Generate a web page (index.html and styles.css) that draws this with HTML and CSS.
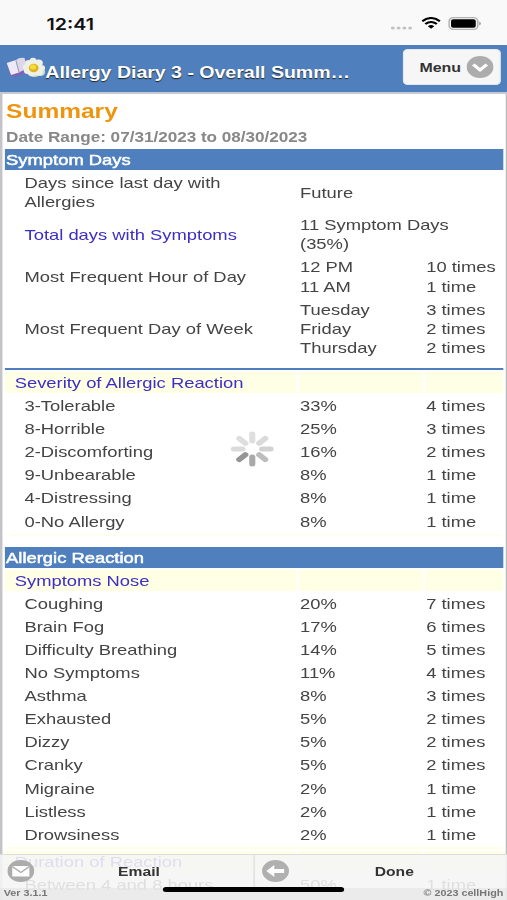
FILE: index.html
```
<!DOCTYPE html>
<html lang="en">
<head>
    <meta charset="UTF-8">
    <title>Allergy Diary 3 - Overall Summary</title>
    <link rel="stylesheet" href="styles.css">
</head>
<body>
<div class="app">
    <!-- Status Bar -->
    <div class="status-bar">
        <span class="time">12:41</span>
        <div class="status-icons">
            <svg class="dots" width="18" height="4" viewBox="0 0 18 4" fill="#c2c2c2">
                <circle cx="1.8" cy="2" r="1.6"/><circle cx="6.5" cy="2" r="1.6"/><circle cx="11.2" cy="2" r="1.6"/><circle cx="15.9" cy="2" r="1.6"/>
            </svg>
            <svg class="wifi" width="16" height="12" viewBox="0 0 16 12" fill="none" stroke="#000" stroke-width="2">
                <path d="M.8 4.3Q8-2.3 15.2 4.3"/>
                <path d="M3.3 7Q8 2.9 12.7 7"/>
                <path d="M8 11.8L5.4 9.2Q8 7 10.6 9.2Z" fill="#000" stroke="none"/>
            </svg>
            <svg class="battery" width="27" height="13" viewBox="0 0 27 13">
                <rect x=".7" y=".7" width="23.4" height="11.6" rx="3.4" fill="#f9f9f9" stroke="#b2b2b2" stroke-width="1.3"/>
                <rect x="2.3" y="2.3" width="20.2" height="8.4" rx="1.8"/>
                <path d="M25.2 4.5Q26.8 5 26.8 6.5T25.2 8.5Z" fill="#aaa"/>
            </svg>
        </div>
    </div>

    <!-- Header -->
    <div class="header">
        <svg class="logo" width="32" height="24" viewBox="0 0 32 24">
            <path d="M.5 7L3 19 6 21 18 17 17 3Z" fill="#8063b5"/>
            <path d="M.5 7L8 4 10.500 16.500 4 19Z" fill="#eeeaf5"/>
            <path d="M8 4Q11 1 15 2L18 14Q13 13.500 10.500 16.500Z" fill="#dcd8e8"/>
            <path d="M8 4.500L10.500 16" stroke="#a79fbd" fill="none"/>
            <g fill="#d3dbd0">
                <ellipse cx="23" cy="18" rx="4" ry="3"/>
                <ellipse cx="28" cy="16" rx="4" ry="4"/>
            </g>
            <g fill="#eef0e8">
                <ellipse cx="22" cy="5.500" rx="3" ry="3.800"/>
                <ellipse cx="21" cy="16.500" rx="3.500" ry="3.500"/>
                <ellipse cx="17" cy="11" rx="3.500" ry="3"/>
                <ellipse cx="28.500" cy="12" rx="3.300" ry="3"/>
                <circle cx="18.500" cy="7" r="3"/><circle cx="26.500" cy="7" r="3.500"/>
                <circle cx="17.500" cy="15" r="3"/><circle cx="26.500" cy="16" r="3.500"/>
            </g>
            <ellipse cx="22.500" cy="12" rx="4" ry="4.200" fill="#dfb51b"/>
            <ellipse cx="22" cy="11" rx="2.500" ry="2.500" fill="#f3dc3f"/>
        </svg>
        <div class="title">Allergy Diary 3 - Overall Summ…</div>
        <div class="menu-button">
            Menu
            <svg width="22" height="22" viewBox="0 0 22 22">
                <circle cx="11" cy="11" r="11" fill="#acacac"/>
                <path d="M5.500 8.500L11 14 16.500 8.500" fill="none" stroke="#fff" stroke-width="3"/>
            </svg>
        </div>
    </div>

    <!-- Summary Content -->
    <div class="content">
        <h1>Summary</h1>
        <div class="date-range">Date Range: 07/31/2023 to 08/30/2023</div>
        <div class="report">
            <div class="section-bar">Symptom Days</div>
            <div class="row"><div>Days since last day with<br>Allergies</div><div>Future</div><div></div></div>
            <div class="row"><div class="link">Total days with Symptoms</div><div class="wide">11 Symptom Days<br>(35%)</div></div>
            <div class="row"><div>Most Frequent Hour of Day</div><div>12 PM<br>11 AM</div><div>10 times<br>1 time</div></div>
            <div class="row"><div>Most Frequent Day of Week</div><div>Tuesday<br>Friday<br>Thursday</div><div>3 times<br>2 times<br>2 times</div></div>

            <div class="divider"></div>
            <div class="row sub"><div>Severity of Allergic Reaction</div><div></div><div></div></div>
            <div class="row"><div>3-Tolerable</div><div>33%</div><div>4 times</div></div>
            <div class="row"><div>8-Horrible</div><div>25%</div><div>3 times</div></div>
            <div class="row"><div>2-Discomforting</div><div>16%</div><div>2 times</div></div>
            <div class="row"><div>9-Unbearable</div><div>8%</div><div>1 time</div></div>
            <div class="row"><div>4-Distressing</div><div>8%</div><div>1 time</div></div>
            <div class="row"><div>0-No Allergy</div><div>8%</div><div>1 time</div></div>
            <div class="spacer"></div>

            <div class="section-bar">Allergic Reaction</div>
            <div class="row sub"><div>Symptoms Nose</div><div></div><div></div></div>
            <div class="row"><div>Coughing</div><div>20%</div><div>7 times</div></div>
            <div class="row"><div>Brain Fog</div><div>17%</div><div>6 times</div></div>
            <div class="row"><div>Difficulty Breathing</div><div>14%</div><div>5 times</div></div>
            <div class="row"><div>No Symptoms</div><div>11%</div><div>4 times</div></div>
            <div class="row"><div>Asthma</div><div>8%</div><div>3 times</div></div>
            <div class="row"><div>Exhausted</div><div>5%</div><div>2 times</div></div>
            <div class="row"><div>Dizzy</div><div>5%</div><div>2 times</div></div>
            <div class="row"><div>Cranky</div><div>5%</div><div>2 times</div></div>
            <div class="row"><div>Migraine</div><div>2%</div><div>1 time</div></div>
            <div class="row"><div>Listless</div><div>2%</div><div>1 time</div></div>
            <div class="row"><div>Drowsiness</div><div>2%</div><div>1 time</div></div>
            <div class="spacer small"></div>
            <div class="row sub"><div>Duration of Reaction</div><div></div><div></div></div>
            <div class="row"><div>Between 4 and 8 hours</div><div>50%</div><div>1 time</div></div>
        </div>
    </div>

    <!-- Loading Spinner -->
    <svg class="spinner" width="36" height="36" viewBox="-18 -18 36 36" stroke-width="5" stroke-linecap="round">
        <path d="M0-8V-15" stroke="#dedede"/>
        <path d="M0-8V-15" stroke="#dadada" transform="rotate(45)"/>
        <path d="M0-8V-15" stroke="#d2d2d2" transform="rotate(90)"/>
        <path d="M0-8V-15" stroke="#bdbdbd" transform="rotate(135)"/>
        <path d="M0-8V-15" stroke="#a9a9a9" transform="rotate(180)"/>
        <path d="M0-8V-15" stroke="#959595" transform="rotate(225)"/>
        <path d="M0-8V-15" stroke="#dbdbdb" transform="rotate(270)"/>
        <path d="M0-8V-15" stroke="#dedede" transform="rotate(315)"/>
    </svg>

    <!-- Footer -->
    <div class="footer">
        <div class="footer-buttons">
            <div class="footer-button">
                <svg width="22" height="22" viewBox="0 0 22 22">
                    <circle cx="11" cy="11" r="11" fill="#acacac"/>
                    <rect x="4" y="6" width="14" height="10.500" fill="#fff"/>
                    <path d="M4 6.500L11 12.500 18 6.500" fill="none" stroke="#acacac" stroke-width="1.300"/>
                </svg>
                Email
            </div>
            <div class="footer-button">
                <svg width="22" height="22" viewBox="0 0 22 22">
                    <circle cx="11" cy="11" r="11" fill="#b0b0b0"/>
                    <path d="M3.500 11L10 5V9H18V13H10V17Z" fill="#fff"/>
                </svg>
                Done
            </div>
        </div>
        <div class="footer-info"><span>Ver 3.1.1</span><span>© 2023 cellHigh</span></div>
    </div>
    <div class="home-indicator"></div>
</div>
</body>
</html>
```

FILE: styles.css
```
body {
    margin: 0;
    overflow: hidden;
    background-color: #fff;
    font-family: "Liberation Sans", Arial, sans-serif;
}

.app {
    position: relative;
    width: 414px;
    height: 900px;
    overflow: hidden;
    transform: scaleX(1.2246);
    transform-origin: 0 0;
    color: #444;
}

/* Status Bar */
.status-bar {
    display: flex;
    justify-content: space-between;
    box-sizing: border-box;
    height: 45px;
    padding: 16px 21px 0 38px;
    background-color: #f9f9f9;
}

.time {
    font: 600 16px/16px Inter, sans-serif;
    color: #111;
}

.status-icons {
    display: flex;
    height: 14px;
    gap: 6px;
    align-items: center;
}

.dots {
    margin-top: 9px;
    margin-right: 1px;
}

/* Header */
.header {
    display: flex;
    box-sizing: border-box;
    height: 49px;
    padding: 4px 5px 0 5px;
    background-color: #4f80bd;
    border-bottom: 2px solid #c3cad6;
}

.logo {
    margin-top: 7px;
}

.title {
    flex: 1;
    padding-top: 14px;
    font-weight: bold;
    font-size: 16px;
    line-height: 20px;
    letter-spacing: -0.03px;
    color: #fff;
    text-shadow: 0 1px 1px #222;
    white-space: nowrap;
}

.menu-button {
    display: flex;
    align-items: center;
    gap: 5px;
    box-sizing: border-box;
    width: 80px;
    height: 36px;
    padding-left: 12.5px;
    background-color: #f6f6f6;
    border: 1px solid #e4e8ee;
    border-radius: 4px;
    font-weight: bold;
    font-size: 13px;
    color: #333;
}

/* Summary */
.content {
    box-sizing: border-box;
    height: 806px;
    padding: 5px 2px 0 2px;
    border-left: 2px solid #c4c4c8;
    border-right: 1px solid #bbb;
}

h1 {
    margin: 0 0 0 1px;
    font-size: 20px;
    line-height: 24px;
    color: #ee9510;
}

.date-range {
    margin: 4px 0 0 1px;
    height: 22px;
    font-weight: bold;
    font-size: 14px;
    line-height: 20px;
    letter-spacing: -0.02px;
    color: #888;
}

.report {
    display: flex;
    flex-direction: column;
    gap: 2px;
    font-size: 15px;
    line-height: 19.1px;
}

.section-bar {
    padding: 1px;
    background-color: #4f80bd;
    color: #fff;
    -webkit-text-stroke: 0.5px #fff;
}

.row {
    display: grid;
    grid-template-columns: 238px 101px 1fr;
    gap: 2px;
    align-items: center;
}

.row div {
    padding: 1px 1px 1px 16px;
    min-height: 19.1px;
}

.row div + div {
    padding-left: 1px;
    padding-right: 0;
}

.row .wide {
    grid-column: 2 / 4;
}

.link,
.sub {
    color: #3c2fc5;
}

.row.sub div {
    padding-left: 8px;
    background-color: #ffffe5;
}

.divider {
    height: 2px;
    margin-top: 8px;
    background-color: #4f80bd;
}

.spacer {
    height: 2px;
    margin-bottom: 9px;
    background-color: #fffff0;
}

.spacer.small {
    margin-bottom: 0;
    background-color: #ffffe5;
}

.spinner {
    position: absolute;
    left: 188px;
    top: 431px;
}

/* Footer */
.footer {
    position: absolute;
    left: 0;
    right: 0;
    bottom: 0;
    height: 46px;
    background-color: rgba(245, 245, 245, 0.88);
    border-top: 1px solid #ddd;
    box-sizing: border-box;
}

.footer-buttons {
    display: grid;
    grid-template-columns: 1fr 1fr;
}

.footer-button {
    position: relative;
    height: 33px;
    line-height: 34px;
    padding-left: 20px;
    text-align: center;
    font-weight: bold;
    font-size: 12.8px;
    color: #333;
}

.footer-button + .footer-button {
    padding-left: 22px;
    border-left: 1px solid #ddd;
}

.footer-button svg {
    position: absolute;
    left: 6px;
    top: 5px;
}

.footer-info {
    display: flex;
    justify-content: space-between;
    padding: 0 3px;
    height: 12px;
    line-height: 11px;
    background-color: rgba(225, 225, 225, 0.5);
    font-weight: bold;
    font-size: 8.8px;
    color: #777;
}

.home-indicator {
    position: absolute;
    left: 133px;
    bottom: 8px;
    width: 148px;
    height: 5px;
    border-radius: 3px;
    background-color: #000;
}
```
